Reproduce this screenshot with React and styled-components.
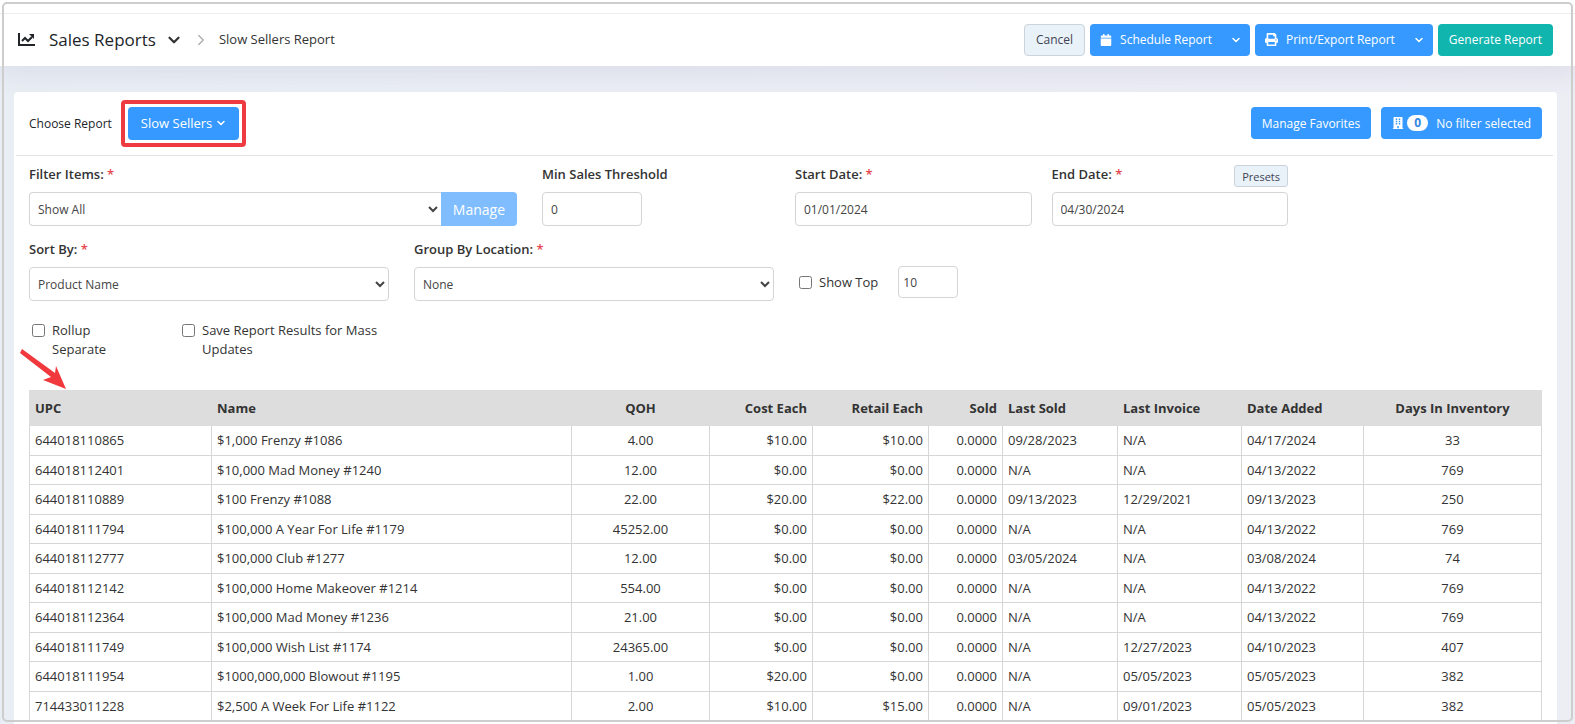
import React from "react";
import styled, { createGlobalStyle, css } from "styled-components";
import { FaCalendar, FaBuilding, FaPrint } from "react-icons/fa";
import { ChevronDown, ChevronRight } from "lucide-react";

const GlobalStyle = createGlobalStyle`
  *, *::before, *::after { box-sizing: border-box; }
  html { height: 100%; }
  body {
    margin: 0;
    height: 100%;
    overflow: hidden;
    background: #fff;
    color: #333;
    font: 13px/19px "Open Sans", "Noto Sans", sans-serif;
  }
  #root { height: 100%; }
  button, input, select { font: inherit; color: inherit; margin: 0; }
`;

const Screen = styled.div`
  position: relative;
  height: 100%;
  overflow: hidden;
  background: linear-gradient(90deg, #e9eef4, #ededf4);
`;

const Frame = styled.div`
  position: absolute;
  inset: 2px;
  border: 2px solid #cdcdcd;
  border-radius: 5px;
  pointer-events: none;
`;

const TopBar = styled.header`
  display: flex;
  align-items: center;
  justify-content: space-between;
  height: 66px;
  padding: 13px 22px 0 18px;
  background: linear-gradient(#fff 13px, #ededed 13px, #ededed 14px, #fff 14px);
  box-shadow: 0 0 28px 4px rgba(86, 86, 160, 0.12);
`;

const Crumbs = styled.nav`
  display: flex;
  align-items: center;
`;

const ChartIcon = styled.svg`
  width: 17px;
  height: 13px;
  margin-right: 14px;
`;

const Title = styled.h1`
  margin: 0 9px 0 0;
  color: #212529;
  font-size: 17px;
  font-weight: 400;
  line-height: 24px;
`;

const IconButton = styled.button`
  display: flex;
  padding: 0;
  border: 0;
  background: none;
`;

const CrumbMark = styled(ChevronRight)`
  margin: 0 9px;
  color: #b0b0b0;
`;

const CrumbLink = styled.a`
  color: inherit;
  text-decoration: none;
`;

const Actions = styled.div`
  display: flex;
  gap: ${(p) => p.$gap || 5}px;
`;

const tones = {
  blue: css`background: #3699ff; color: #fff;`,
  teal: css`background: #10b5ae; color: #fff;`,
  pale: css`background: #e9f2f9; color: #3f4254; border: 1px solid #ccd3da;`,
};

const Button = styled.button`
  display: inline-flex;
  align-items: center;
  justify-content: center;
  height: 32px;
  padding: 0 11px;
  border: 0;
  border-radius: 4px;
  font-size: 12px;
  line-height: 19px;
  white-space: nowrap;
  ${(p) => tones[p.$tone || "blue"]}
`;

const SplitButton = styled.div`
  display: flex;
  ${Button}:first-child { border-radius: 4px 0 0 4px; padding: 0 10px; gap: 8px; }
  ${Button}:last-child { border-radius: 0 4px 4px 0; padding: 0 8px; }
`;

const Panel = styled.main`
  margin: 26px 18px 0 14px;
  padding-bottom: 20px;
  border-radius: 4px 4px 0 0;
  background: #fff;
`;

const ChooseRow = styled.section`
  display: flex;
  align-items: center;
  justify-content: space-between;
  height: 64px;
  margin: 0 4px 0 2px;
  padding: 0 11px 1px 13px;
  border-bottom: 1px solid #e4e4e7;
`;

const Chooser = styled.div`
  display: flex;
  align-items: center;
  gap: 9px;
  color: #212529;
  font-size: 12px;
  font-weight: 500;
`;

const Highlight = styled.div`
  padding: 3px;
  border: 4px solid #ee3b41;
  border-radius: 4px;
  display: flex;
`;

const ChooserButton = styled(Button)`
  gap: 3px;
  height: 33px;
  padding: 0 12px 0 13px;
  font-size: 13px;
`;

const Badge = styled.span`
  margin: 0 8px 0 3px;
  padding: 0 7px;
  border-radius: 8px;
  background: #fff;
  color: #3188e0;
  font-size: 12px;
  font-weight: 700;
  line-height: 16px;
`;

const FilterGrid = styled.div`
  display: grid;
  grid-template-columns: ${(p) => p.$columns};
  column-gap: 25px;
  margin: 0 15px;
  padding-top: ${(p) => p.$top}px;
`;

const DateRange = styled.div`
  display: grid;
  grid-template-columns: 1fr 1fr;
  column-gap: 20px;
`;

const Field = styled.div`
  min-width: 0;
`;

const LabelRow = styled.div`
  display: flex;
  align-items: flex-start;
  justify-content: space-between;
  height: 22px;
  margin-bottom: 5px;
`;

const Label = styled.label`
  font-weight: 600;
`;

const Star = styled.span`
  color: #e5484d;
`;

const box = css`
  height: 34px;
  border: 1px solid #d4d4d4;
  border-radius: 4px;
  background: #fff;
  color: #444;
  font-size: 12px;
`;

const TextBox = styled.input`
  ${box}
  width: ${(p) => p.$width || "100%"};
  padding: 0 8px;
`;

const SmallBox = styled(TextBox)`
  height: 32px;
  padding: 0 4px;
  font-size: 12px;
`;

const Picker = styled.select`
  ${box}
  width: 100%;
  padding: 0 4px;
`;

const InputGroup = styled.div`
  display: flex;
  ${Picker} { flex: 1; border-radius: 4px 0 0 4px; border-right: 0; }
  ${Button} { height: 34px; padding: 0 12px; border-radius: 0 4px 4px 0; background: #80bdff; font-size: 14px; }
`;

const PresetButton = styled(Button)`
  height: 22px;
  padding: 0 7px;
  font-size: 11px;
  border-radius: 3px;
`;

const TopLimit = styled.div`
  display: flex;
  align-items: center;
  gap: 20px;
  height: 32px;
  margin-top: 26px;
`;

const Check = styled.label`
  display: flex;
  align-items: flex-start;
  gap: 7px;
  width: ${(p) => p.$width || "auto"};
  input { flex: none; width: 13px; height: 13px; margin: 3px 0 0; }
`;

const CheckRow = styled.div`
  display: flex;
  gap: 20px;
  padding: 20px 18px 0;
`;

const TableArea = styled.div`
  position: relative;
  margin: 31px 15px 0;
`;

const Arrow = styled.svg`
  position: absolute;
  left: -9px;
  top: -41px;
  width: 48px;
  height: 42px;
`;

const Table = styled.table`
  width: 100%;
  table-layout: fixed;
  border-collapse: collapse;
`;

const Cell = styled.td`
  padding: 0 5px;
  border: 1px solid #d6d6d6;
  text-align: ${(p) => p.$align || "left"};
  white-space: nowrap;
`;

const HeadCell = styled(Cell)`
  height: 35px;
  border-color: #ddd;
  background: #ddd;
  font-weight: 700;
`;

const BodyRow = styled.tr`
  height: 30px;
  &:nth-child(even) { height: 29px; }
`;

const columns = [
  ["UPC", 182], ["Name", 360], ["QOH", 138, "center"], ["Cost Each", 103, "right"],
  ["Retail Each", 116, "right"], ["Sold", 74, "right"], ["Last Sold", 115],
  ["Last Invoice", 124], ["Date Added", 122], ["Days In Inventory", 178, "center"],
];
const totalWidth = columns.reduce((sum, c) => sum + c[1], 0);

const rows = [
  ["644018110865", "$1,000 Frenzy #1086", "4.00", "$10.00", "$10.00", "0.0000", "09/28/2023", "N/A", "04/17/2024", "33"],
  ["644018112401", "$10,000 Mad Money #1240", "12.00", "$0.00", "$0.00", "0.0000", "N/A", "N/A", "04/13/2022", "769"],
  ["644018110889", "$100 Frenzy #1088", "22.00", "$20.00", "$22.00", "0.0000", "09/13/2023", "12/29/2021", "09/13/2023", "250"],
  ["644018111794", "$100,000 A Year For Life #1179", "45252.00", "$0.00", "$0.00", "0.0000", "N/A", "N/A", "04/13/2022", "769"],
  ["644018112777", "$100,000 Club #1277", "12.00", "$0.00", "$0.00", "0.0000", "03/05/2024", "N/A", "03/08/2024", "74"],
  ["644018112142", "$100,000 Home Makeover #1214", "554.00", "$0.00", "$0.00", "0.0000", "N/A", "N/A", "04/13/2022", "769"],
  ["644018112364", "$100,000 Mad Money #1236", "21.00", "$0.00", "$0.00", "0.0000", "N/A", "N/A", "04/13/2022", "769"],
  ["644018111749", "$100,000 Wish List #1174", "24365.00", "$0.00", "$0.00", "0.0000", "N/A", "12/27/2023", "04/10/2023", "407"],
  ["644018111954", "$1000,000,000 Blowout #1195", "1.00", "$20.00", "$0.00", "0.0000", "N/A", "05/05/2023", "05/05/2023", "382"],
  ["714433011228", "$2,500 A Week For Life #1122", "2.00", "$10.00", "$15.00", "0.0000", "N/A", "09/01/2023", "05/05/2023", "382"],
];

function Caption({ htmlFor, required, children }) {
  return (
    <Label htmlFor={htmlFor}>
      {children}
      {required && <Star> *</Star>}
    </Label>
  );
}

export default function App() {
  return (
    <Screen>
      <GlobalStyle />
      <TopBar>
        <Crumbs aria-label="Breadcrumb">
          <ChartIcon viewBox="0 0 17 13" fill="none" stroke="#212529" strokeWidth="2" aria-hidden="true">
            <path d="M1 0V12H17" />
            <path d="M4 8L7 5L10 8L14 4" />
            <path d="M11 1H16V6Z" fill="#212529" stroke="none" />
          </ChartIcon>
          <Title>Sales Reports</Title>
          <IconButton aria-label="Switch report section"><ChevronDown size={18} strokeWidth={3} /></IconButton>
          <CrumbMark size={18} />
          <CrumbLink href="#slow-sellers">Slow Sellers Report</CrumbLink>
        </Crumbs>
        <Actions>
          <Button $tone="pale">Cancel</Button>
          <SplitButton>
            <Button><FaCalendar size={12} />Schedule Report</Button>
            <Button aria-label="Schedule options"><ChevronDown size={12} strokeWidth={3} /></Button>
          </SplitButton>
          <SplitButton>
            <Button><FaPrint size={13} />Print/Export Report</Button>
            <Button aria-label="Export options"><ChevronDown size={12} strokeWidth={3} /></Button>
          </SplitButton>
          <Button $tone="teal">Generate Report</Button>
        </Actions>
      </TopBar>

      <Panel>
        <ChooseRow>
          <Chooser>
            <span>Choose Report</span>
            <Highlight>
              <ChooserButton>Slow Sellers<ChevronDown size={12} strokeWidth={3} /></ChooserButton>
            </Highlight>
          </Chooser>
          <Actions $gap={10}>
            <Button>Manage Favorites</Button>
            <Button><FaBuilding size={12} /><Badge>0</Badge>No filter selected</Button>
          </Actions>
        </ChooseRow>

        <FilterGrid $columns="488fr 228fr 493fr 229fr" $top={9}>
          <Field>
            <LabelRow><Caption htmlFor="items" required>Filter Items:</Caption></LabelRow>
            <InputGroup>
              <Picker id="items"><option>Show All</option></Picker>
              <Button>Manage</Button>
            </InputGroup>
          </Field>
          <Field>
            <LabelRow><Caption htmlFor="threshold">Min Sales Threshold</Caption></LabelRow>
            <TextBox id="threshold" defaultValue="0" $width="100px" />
          </Field>
          <DateRange>
            <Field>
              <LabelRow><Caption htmlFor="start" required>Start Date:</Caption></LabelRow>
              <TextBox id="start" defaultValue="01/01/2024" />
            </Field>
            <Field>
              <LabelRow>
                <Caption htmlFor="end" required>End Date:</Caption>
                <PresetButton $tone="pale">Presets</PresetButton>
              </LabelRow>
              <TextBox id="end" defaultValue="04/30/2024" />
            </Field>
          </DateRange>
        </FilterGrid>

        <FilterGrid $columns="360fr 360fr 743fr" $top={14}>
          <Field>
            <LabelRow><Caption htmlFor="sort" required>Sort By:</Caption></LabelRow>
            <Picker id="sort"><option>Product Name</option></Picker>
          </Field>
          <Field>
            <LabelRow><Caption htmlFor="group" required>Group By Location:</Caption></LabelRow>
            <Picker id="group"><option>None</option></Picker>
          </Field>
          <TopLimit>
            <Check><input type="checkbox" />Show Top</Check>
            <SmallBox $width="60px" aria-label="Number of items" defaultValue="10" />
          </TopLimit>
        </FilterGrid>

        <CheckRow>
          <Check $width="130px"><input type="checkbox" /><span>Rollup<br />Separate</span></Check>
          <Check $width="210px"><input type="checkbox" /><span>Save Report Results for Mass Updates</span></Check>
        </CheckRow>

        <TableArea>
          <Table>
            <colgroup>
              {columns.map(([name, width]) => (
                <col key={name} style={{ width: `${(width / totalWidth) * 100}%` }} />
              ))}
            </colgroup>
            <thead>
              <tr>{columns.map(([name, , align]) => <HeadCell as="th" key={name} $align={align}>{name}</HeadCell>)}</tr>
            </thead>
            <tbody>
              {rows.map((row) => (
                <BodyRow key={row[0]}>
                  {row.map((value, i) => <Cell key={columns[i][0]} $align={columns[i][2]}>{value}</Cell>)}
                </BodyRow>
              ))}
            </tbody>
          </Table>
          <Arrow viewBox="0 0 48 42" fill="#f0383d" aria-hidden="true">
            <path d="M2 0L35 24L36 17L46 40L23 31L31 28L0 4Z" />
          </Arrow>
        </TableArea>
      </Panel>
      <Frame />
    </Screen>
  );
}
